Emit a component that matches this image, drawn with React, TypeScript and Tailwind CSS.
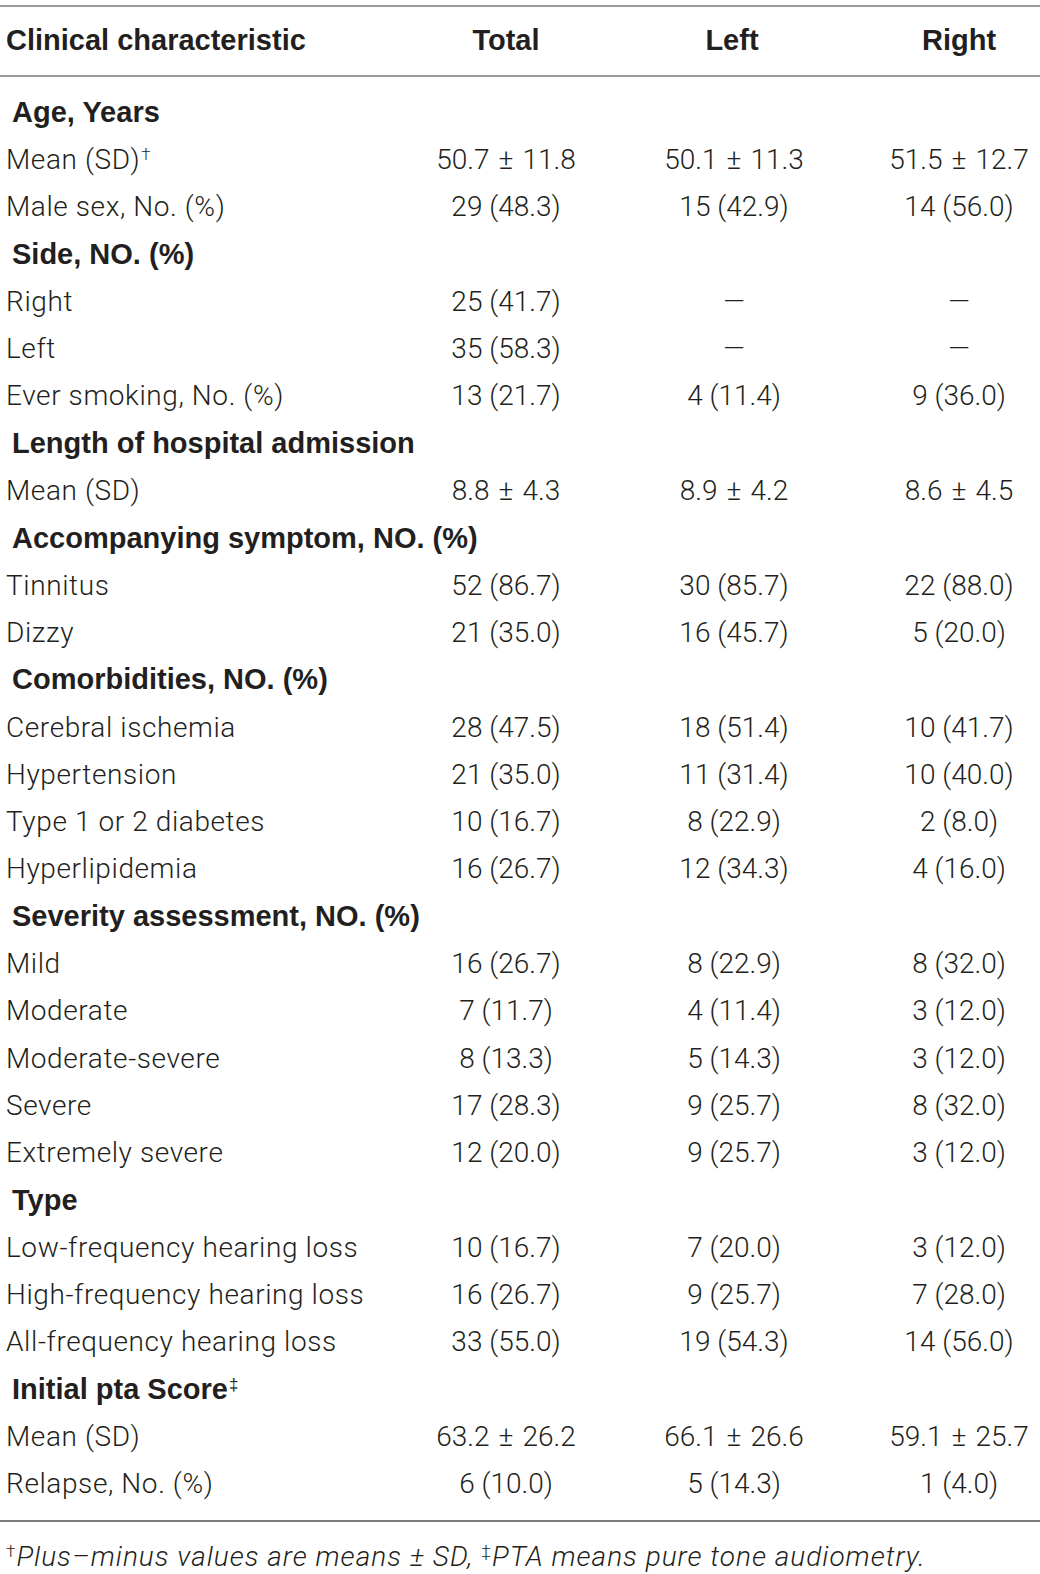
import React from "react";

type Row =
  | { kind: "section"; label: string; sup?: string }
  | { kind: "data"; label: string; sup?: string; total: string; left: string; right: string };

const rows: Row[] = [
  { kind: "section", label: "Age, Years" },
  { kind: "data", label: "Mean (SD)", sup: "†", total: "50.7 ± 11.8", left: "50.1 ± 11.3", right: "51.5 ± 12.7" },
  { kind: "data", label: "Male sex, No. (%)", total: "29 (48.3)", left: "15 (42.9)", right: "14 (56.0)" },
  { kind: "section", label: "Side, NO. (%)" },
  { kind: "data", label: "Right", total: "25 (41.7)", left: "—", right: "—" },
  { kind: "data", label: "Left", total: "35 (58.3)", left: "—", right: "—" },
  { kind: "data", label: "Ever smoking, No. (%)", total: "13 (21.7)", left: "4 (11.4)", right: "9 (36.0)" },
  { kind: "section", label: "Length of hospital admission" },
  { kind: "data", label: "Mean (SD)", total: "8.8 ± 4.3", left: "8.9 ± 4.2", right: "8.6 ± 4.5" },
  { kind: "section", label: "Accompanying symptom, NO. (%)" },
  { kind: "data", label: "Tinnitus", total: "52 (86.7)", left: "30 (85.7)", right: "22 (88.0)" },
  { kind: "data", label: "Dizzy", total: "21 (35.0)", left: "16 (45.7)", right: "5 (20.0)" },
  { kind: "section", label: "Comorbidities, NO. (%)" },
  { kind: "data", label: "Cerebral ischemia", total: "28 (47.5)", left: "18 (51.4)", right: "10 (41.7)" },
  { kind: "data", label: "Hypertension", total: "21 (35.0)", left: "11 (31.4)", right: "10 (40.0)" },
  { kind: "data", label: "Type 1 or 2 diabetes", total: "10 (16.7)", left: "8 (22.9)", right: "2 (8.0)" },
  { kind: "data", label: "Hyperlipidemia", total: "16 (26.7)", left: "12 (34.3)", right: "4 (16.0)" },
  { kind: "section", label: "Severity assessment, NO. (%)" },
  { kind: "data", label: "Mild", total: "16 (26.7)", left: "8 (22.9)", right: "8 (32.0)" },
  { kind: "data", label: "Moderate", total: "7 (11.7)", left: "4 (11.4)", right: "3 (12.0)" },
  { kind: "data", label: "Moderate-severe", total: "8 (13.3)", left: "5 (14.3)", right: "3 (12.0)" },
  { kind: "data", label: "Severe", total: "17 (28.3)", left: "9 (25.7)", right: "8 (32.0)" },
  { kind: "data", label: "Extremely severe", total: "12 (20.0)", left: "9 (25.7)", right: "3 (12.0)" },
  { kind: "section", label: "Type" },
  { kind: "data", label: "Low-frequency hearing loss", total: "10 (16.7)", left: "7 (20.0)", right: "3 (12.0)" },
  { kind: "data", label: "High-frequency hearing loss", total: "16 (26.7)", left: "9 (25.7)", right: "7 (28.0)" },
  { kind: "data", label: "All-frequency hearing loss", total: "33 (55.0)", left: "19 (54.3)", right: "14 (56.0)" },
  { kind: "section", label: "Initial pta Score", sup: "‡" },
  { kind: "data", label: "Mean (SD)", total: "63.2 ± 26.2", left: "66.1 ± 26.6", right: "59.1 ± 25.7" },
  { kind: "data", label: "Relapse, No. (%)", total: "6 (10.0)", left: "5 (14.3)", right: "1 (4.0)" },
];

const grid = "grid grid-cols-[393px_226px_226px_195px] items-center";

function Value({ v }: { v: string }) {
  if (v === "—") return <span className="inline-block w-[22px]">—</span>;
  const parts = v.split(" ± ");
  if (parts.length === 2) {
    return (
      <span>
        {parts[0]}
        <span className="mx-[9px]">±</span>
        {parts[1]}
      </span>
    );
  }
  return <span>{v}</span>;
}

export default function App() {
  return (
    <div className="w-[1040px] bg-white text-[#231f20] font-['Liberation_Sans',Arial,sans-serif]">
      <div className="h-[5px]" />
      {/* header */}
      <div className={`${grid} h-[72px] border-y-2 border-[#9a9a9a] text-[29px] font-bold`}>
        <div className="pl-[6px]">Clinical characteristic</div>
        <div className="text-center">Total</div>
        <div className="text-center">Left</div>
        <div className="text-center pl-[33px]">Right</div>
      </div>

      {/* body */}
      <div className="py-[12px] border-b-2 border-[#7a7a7a]">
        {rows.map((r, i) =>
          r.kind === "section" ? (
            <div key={i} className="h-[47.3px] flex items-center pl-[12px] text-[29px] font-bold">
              <span>
                {r.label}
                {r.sup && <sup className="text-[17px] font-normal ml-[1px]">{r.sup}</sup>}
              </span>
            </div>
          ) : (
            <div key={i} className={`${grid} h-[47.3px] text-[28px] font-light font-['Roboto',sans-serif]`}>
              <div className="pl-[6px] whitespace-nowrap tracking-[0.6px]">
                {r.label}
                {r.sup && <sup className="text-[17px] ml-[1px]">{r.sup}</sup>}
              </div>
              <div className="text-center whitespace-nowrap">
                <Value v={r.total} />
              </div>
              <div className="text-center whitespace-nowrap pl-[4px]">
                <Value v={r.left} />
              </div>
              <div className="text-center whitespace-nowrap pl-[33px]">
                <Value v={r.right} />
              </div>
            </div>
          )
        )}
      </div>

      {/* footnote */}
      <div className="pl-[6px] pt-[14px] text-[28px] italic font-light font-['Roboto',sans-serif] whitespace-nowrap tracking-[1px]">
        <sup className="text-[17px] not-italic">†</sup>Plus–minus values are means ± SD,{" "}
        <sup className="text-[17px] not-italic">‡</sup>PTA means pure tone audiometry.
      </div>
    </div>
  );
}
